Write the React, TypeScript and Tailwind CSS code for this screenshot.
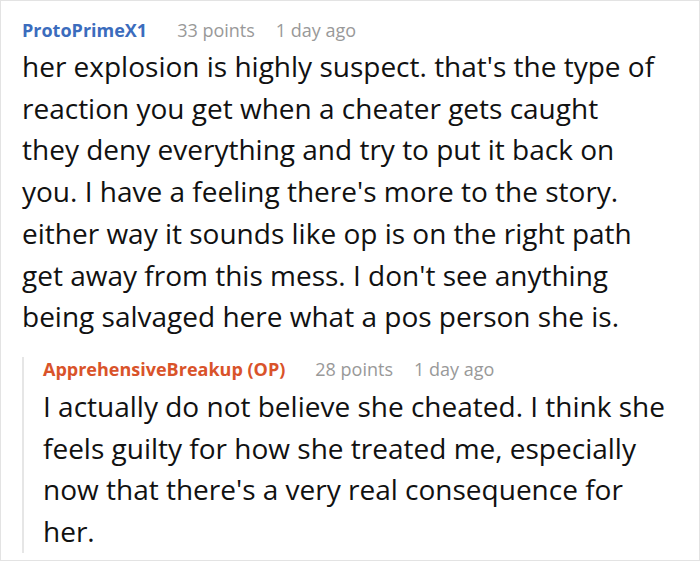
const font = { fontFamily: '"Open Sans", "Noto Sans", sans-serif' };

function Meta({ name, op, points, color }: { name: string; op?: boolean; points: number; color: string }) {
  return (
    <div className="flex items-baseline text-[18px] leading-[24px]">
      <span className={`font-bold ${color}`}>
        {name}
        {op && " (OP)"}
      </span>
      <span className="ml-[30px] text-[#999999]">{points} points</span>
      <span className="ml-[21px] text-[#999999]">1 day ago</span>
    </div>
  );
}

export default function App() {
  return (
    <div
      className="h-[561px] w-[700px] overflow-hidden border border-[#e3e3e3] bg-white text-[#111111]"
      style={font}
    >
      <div className="pl-[21px] pr-[33px] pt-[17px]">
        <Meta name="ProtoPrimeX1" points={33} color="text-[#3b6cbd]" />
        <p className="mr-[7px] mt-[4px] text-[28px] leading-[41.7px]">
          her explosion is highly suspect. that's the type of reaction you get when a cheater gets caught
          they deny everything and try to put it back on you. I have a feeling there's more to the story.
          either way it sounds like op is on the right path get away from this mess. I don't see anything
          being salvaged here what a pos person she is.
        </p>
        <div className="mt-[19px] border-l-2 border-[#e6e6e6] pl-[19px]">
          <Meta name="ApprehensiveBreakup" op points={28} color="text-[#d9532a]" />
          <p className="mt-[5px] text-[28px] leading-[41.7px]">
            I actually do not believe she cheated. I think she feels guilty for how she treated me,
            especially now that there's a very real consequence for her.
          </p>
        </div>
      </div>
    </div>
  );
}
